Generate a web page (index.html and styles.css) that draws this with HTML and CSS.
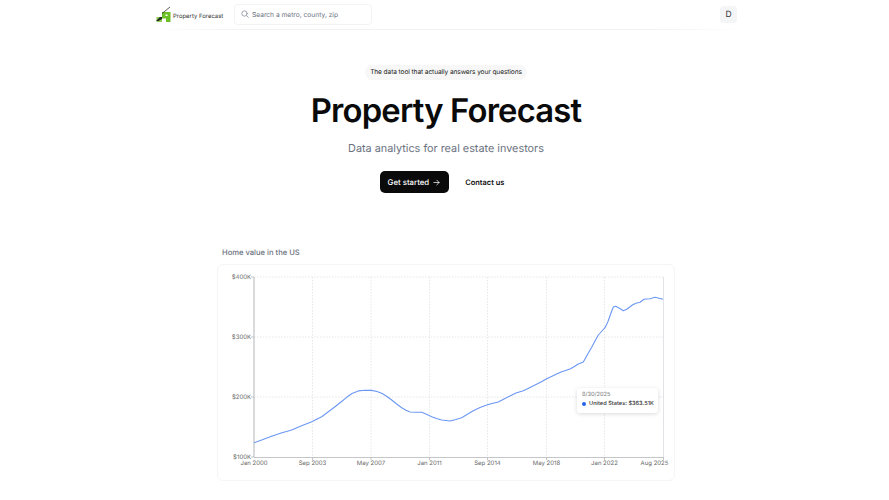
FILE: index.html
```html
<!DOCTYPE html>
<html lang="en">
<head>
    <meta charset="UTF-8">
    <meta name="viewport" content="width=device-width, initial-scale=1.0">
    <title>Property Forecast</title>
    <link rel="stylesheet" href="styles.css">
</head>
<body>

<header class="topbar">
    <div class="brand">
        <svg class="brand-mark" width="17" height="17" viewBox="0 0 17 17">
            <path d="M1.500 11 H7 V16 H1.500 Z" fill="#8fcb55"/>
            <path d="M1 15 L5 11 L7 11 L7 13 L3.500 15 Z" fill="#23291e"/>
            <path d="M7 6 H15.500 V16 H11 V12.500 H7 Z M10.500 8.500 V10 H12.500 V8.500 Z" fill="#6cc024" fill-rule="evenodd"/>
            <path d="M7 7.500 L15 1" stroke="#333" stroke-width="0.800" fill="none"/>
        </svg>
        <span class="brand-name">Property Forecast</span>
    </div>
    <div class="search">
        <svg class="search-icon" width="8" height="8" viewBox="0 0 24 24" fill="none" stroke="#8b93a1" stroke-width="2.500" stroke-linecap="round">
            <circle cx="10.500" cy="10.500" r="8"/>
            <path d="M16.500 16.500 L22 22"/>
        </svg>
        <span class="search-text">Search a metro, county, zip</span>
    </div>
    <div class="avatar">D</div>
</header>

<section class="hero">
    <p class="pill">The data tool that actually answers your questions</p>
    <h1>Property Forecast</h1>
    <p class="subtitle">Data analytics for real estate investors</p>
    <div class="actions">
        <a class="btn-primary" href="#">Get started
            <svg width="7" height="7" viewBox="0 0 24 24" fill="none" stroke="#fff" stroke-width="2.500" stroke-linecap="round" stroke-linejoin="round">
                <path d="M3 12 H21 M13 4 L21 12 L13 20"/>
            </svg>
        </a>
        <a class="btn-link" href="#">Contact us</a>
    </div>
</section>

<section class="chart-section">
    <h2>Home value in the US</h2>
    <div class="chart-card">
        <svg class="chart" width="458" height="217" viewBox="217 264 458 217">
            <g class="grid">
                <path d="M254 277 H663 M254 337 H663 M254 397 H663"/>
                <path d="M312.500 277 V457 M371 277 V457 M429.500 277 V457 M487.500 277 V457 M546.500 277 V457 M604.500 277 V457"/>
            </g>
            <path class="axis-right" d="M663.500 277 V457"/>
            <path class="axis-left" d="M254 277 V457"/>
            <path class="axis" d="M251 277 H254 M251 337 H254 M251 397 H254 M251 457 H254 M254 457.500 H663.500"/>
            <path class="axis" d="M312.500 457 V460 M371 457 V460 M429.500 457 V460 M487.500 457 V460 M546.500 457 V460 M604.500 457 V460 M663.500 457 V460"/>
            <g class="y-labels">
                <text x="251" y="279.200">$400K</text>
                <text x="251" y="339">$300K</text>
                <text x="251" y="399">$200K</text>
                <text x="251" y="459">$100K</text>
            </g>
            <g class="x-labels">
                <text x="254" y="464.500">Jan 2000</text>
                <text x="312.500" y="464.500">Sep 2003</text>
                <text x="371" y="464.500">May 2007</text>
                <text x="429.500" y="464.500">Jan 2011</text>
                <text x="487.500" y="464.500">Sep 2014</text>
                <text x="546.500" y="464.500">May 2018</text>
                <text x="604.500" y="464.500">Jan 2022</text>
                <text x="654.500" y="464.500">Aug 2025</text>
            </g>
            <polyline class="line" points="254,442.800 263,439.500 273,435.700 282,432.800 291.700,430 301,426 311.700,421.700 321.700,416.700 328,412 335,406.700 341,402 346.700,397.300 352,393.500 358.300,390.900 365,390.300 371.700,390.400 377,391.500 381.700,393.300 387,396.500 391.700,400 396,403.500 401.700,407.700 406,410.300 410,412 416,412.200 421.700,412.300 426.500,414.300 431.700,416.700 436.500,418.500 441.700,420 450,421 456,419.500 461.700,417.700 467,414.500 473.300,410.700 480,407.500 486.700,405 492,403.500 498.300,402 504,399 510,396 516,393 523.300,390.700 529,388 535,385 541,382 546.700,378.700 556.700,374 561.700,371.700 570,369 574,366.800 578.300,364 583.300,362 587.500,354.500 591.700,347.300 595,341 598.300,335 602,331 605,327.700 608,321.500 611,313 613.300,307 615.700,306.300 619.500,308.300 623.300,310.700 626.700,309.300 632.700,304.700 636,303.200 640,302.300 644,299.300 650,298.700 655,297.300 659,298.200 663,299.300"/>
        </svg>
        <div class="tooltip">
            <div class="tooltip-date">8/30/2025</div>
            <div class="tooltip-row"><span class="dot"></span>United States: $363.51K</div>
        </div>
    </div>
</section>

</body>
</html>
```

FILE: styles.css
```css
body {
    margin: 0;
    padding: 0 0 0 3px;
    background-color: #fff;
    color: #0a0a0a;
    font-family: 'Inter', sans-serif;
    text-rendering: geometricPrecision;
    height: 500px;
    overflow: hidden;
    box-sizing: border-box;
}

.topbar {
    width: 594px;
    height: 30px;
    margin: 0 auto;
    padding: 0 6px;
    box-sizing: border-box;
    display: flex;
    align-items: center;
    border-bottom: 1px solid;
    border-image: linear-gradient(to right, transparent, #f1f2f4 15%, #f1f2f4 85%, transparent) 1;
}

.brand {
    display: flex;
    align-items: center;
    gap: 1px;
    width: 79px;
}

.brand-mark {
    flex: none;
    margin-top: -1px;
}

.brand-name {
    font-size: 5.950px;
    color: #333;
    white-space: nowrap;
    margin-top: 3px;
}

.search {
    width: 138px;
    height: 21px;
    box-sizing: border-box;
    border: 1px solid #f2f3f5;
    border-radius: 4px;
    display: flex;
    align-items: center;
    padding-left: 6px;
    gap: 3px;
    margin-bottom: 1px;
}

.search-text {
    font-size: 6.650px;
    color: #6b7280;
    margin-top: 1px;
}

.avatar {
    width: 17px;
    height: 17px;
    margin-left: auto;
    background: #f4f5f7;
    border-radius: 4px;
    font-size: 8.500px;
    color: #333;
    display: flex;
    align-items: center;
    justify-content: center;
}

.hero {
    display: flex;
    flex-direction: column;
    align-items: center;
    padding-top: 35px;
}

.pill {
    margin: 0;
    height: 15px;
    line-height: 15px;
    padding: 0 5px;
    background: #f7f7f8;
    border-radius: 8px;
    font-size: 6.600px;
    letter-spacing: -0.100px;
    color: #222;
}

h1 {
    margin: 8px 0 0 0;
    font-size: 32.800px;
    line-height: 44px;
    font-weight: 600;
    letter-spacing: -0.820px;
    color: #0a0a0a;
}

.subtitle {
    margin: 7px 0 0 0;
    font-size: 10.850px;
    line-height: 18px;
    color: #6b7280;
}

.actions {
    display: flex;
    align-items: center;
    gap: 8px;
    margin-top: 14px;
}

.btn-primary {
    display: flex;
    align-items: center;
    gap: 4px;
    height: 22px;
    padding: 0 9px 0 8px;
    background: #0a0a0a;
    border-radius: 5px;
    color: #fff;
    font-size: 7.800px;
    font-weight: 500;
    text-decoration: none;
}

.btn-link {
    padding: 0 8px;
    color: #111;
    font-size: 7.500px;
    font-weight: 600;
    text-decoration: none;
}

.chart-section {
    width: 458px;
    margin: 54px auto 0 auto;
}

h2 {
    margin: 0 0 5px 5px;
    font-size: 7.600px;
    line-height: 12px;
    font-weight: 500;
    color: #6b7280;
}

.chart-card {
    position: relative;
    height: 217px;
    box-sizing: border-box;
    border: 1px solid #f5f5f6;
    border-radius: 6px;
}

.chart {
    display: block;
    margin: -1px;
}

.grid path {
    fill: none;
    stroke: #dfe1e5;
    stroke-width: 0.800;
    stroke-dasharray: 1.500 1.500;
}

.axis-left {
    fill: none;
    stroke: #c4c6ca;
    stroke-width: 1.300;
}

.axis-right {
    fill: none;
    stroke: #e2e3e6;
    stroke-width: 1;
}

.axis {
    fill: none;
    stroke: #b5b7bb;
    stroke-width: 0.800;
}

.y-labels text {
    font-size: 6px;
    fill: #666;
    text-anchor: end;
}

.x-labels text {
    font-size: 6px;
    fill: #666;
    text-anchor: middle;
}

.line {
    fill: none;
    stroke: #6b97f3;
    stroke-width: 1.100;
    stroke-linejoin: round;
}

.tooltip {
    position: absolute;
    left: 359px;
    top: 123px;
    width: 81px;
    height: 25px;
    box-sizing: border-box;
    padding: 3px 5px;
    background: #fff;
    border-radius: 3px;
    box-shadow: 0 1px 4px rgba(0, 0, 0, 0.15);
    font-size: 5.650px;
    line-height: 8px;
}

.tooltip-date {
    color: #777;
}

.tooltip-row {
    display: flex;
    align-items: center;
    gap: 3px;
    margin-top: 1px;
    color: #333;
    font-weight: 500;
    white-space: nowrap;
}

.dot {
    flex: none;
    width: 4px;
    height: 4px;
    border-radius: 50%;
    background: #2563eb;
}
```
